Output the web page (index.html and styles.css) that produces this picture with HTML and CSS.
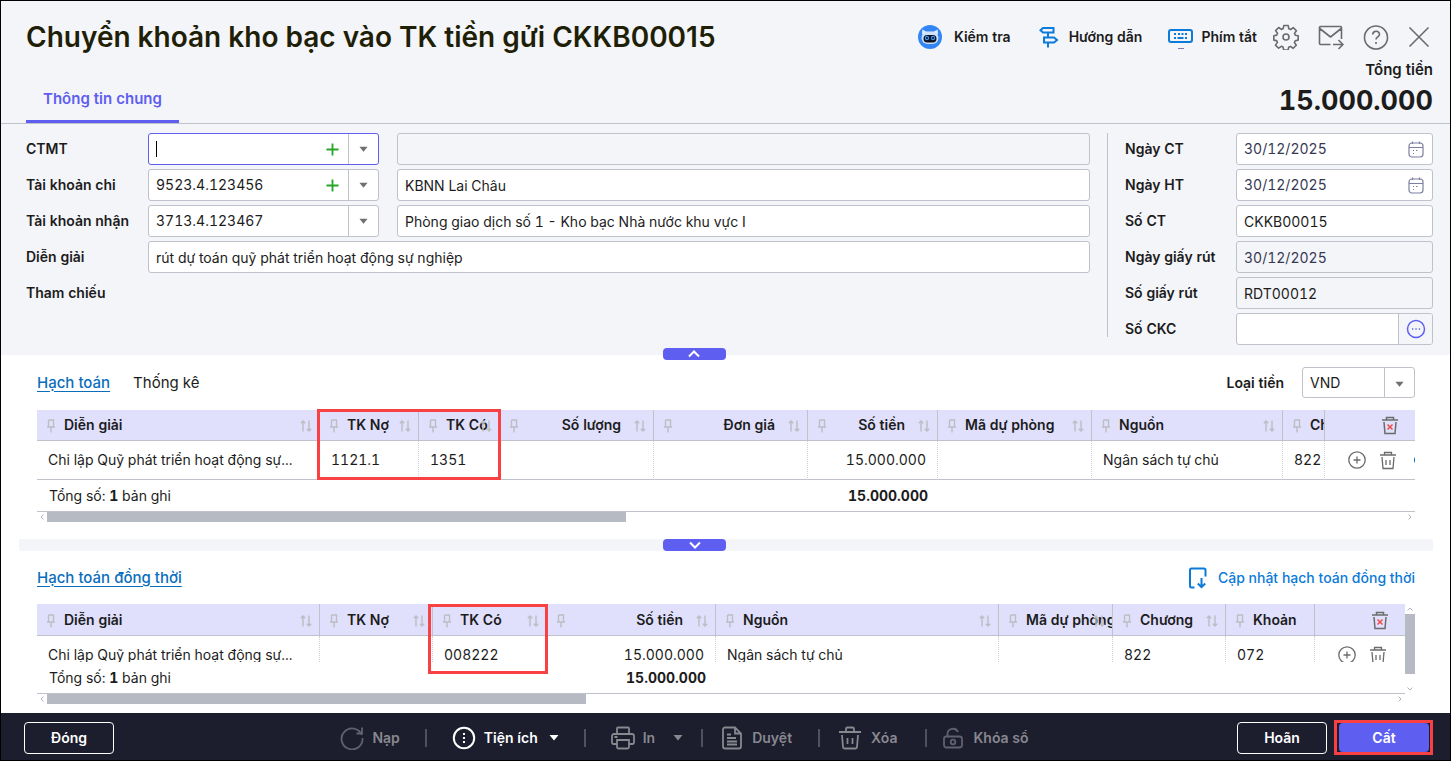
FILE: index.html
```html
<!DOCTYPE html>
<html lang="vi">
<head>
<meta charset="utf-8">
<title>Chuyển khoản kho bạc vào TK tiền gửi</title>
<link rel="stylesheet" href="styles.css">
</head>
<body>
<svg class="defs" aria-hidden="true">
  <symbol id="pin" viewBox="0 0 10 14"><path d="M2.500 1h5v6.500M2.500 1v6.500M1 8h8M5 8v5.500" /></symbol>
  <symbol id="sort" viewBox="0 0 12 12"><path d="M3 11.500V1M.8 3.200 3 1l2.200 2.200M9 .5V11M6.800 8.800 9 11l2.200-2.200" /></symbol>
  <symbol id="plus" viewBox="0 0 14 14"><path d="M7 .5v13M.5 7h13" /></symbol>
  <symbol id="caret" viewBox="0 0 10 6"><path d="M.5.500h9L5 6z" /></symbol>
  <symbol id="calendar" viewBox="0 0 16 17"><rect x="1" y="2" width="14" height="14" rx="3"/><path d="M1 6.500h14M4.500.500v2.500M11.500.500v2.500M5 9.500h1M8 9.500h1.500M5 12.500h1" /></symbol>
  <symbol id="trash" viewBox="0 0 18 20"><path d="M1 5h16M5.500 5V2.500h7V5M3 7l1 11.500h10L15 7" /></symbol>
  <symbol id="bars" viewBox="0 0 18 20"><path d="M7 10v5M11 10v5" /></symbol>
  <symbol id="addrow" viewBox="0 0 18 18"><circle cx="9" cy="9" r="8.200"/><path d="M9 5.500v7M5.500 9h7" /></symbol>
</svg>
<div class="window">
  <header class="header">
    <div class="heading">
      <h1>Chuyển khoản kho bạc vào TK tiền gửi CKKB00015</h1>
      <button class="main-tab" type="button">Thông tin chung</button>
    </div>
    <div class="summary">
      <div class="toolbar">
        <button class="tool" type="button">
          <svg width="24" height="24" viewBox="0 0 24 24"><circle cx="12" cy="12" r="12" fill="#3385f5" stroke="none"/><path d="M4 9.500 4.300 4.500 8 6.500h8l3.700-2 .3 5" fill="#d9ecff" stroke="none"/><rect x="3.500" y="7" width="17" height="12" rx="6" fill="#cfe2f7" stroke="none"/><rect x="5.500" y="10" width="13" height="7.500" rx="3.700" fill="#0b1224" stroke="none"/><circle cx="9" cy="13" r="1.600" stroke="#3f95e8" stroke-width="1.200"/><circle cx="15" cy="13" r="1.600" stroke="#3f95e8" stroke-width="1.200"/></svg>
          <span>Kiểm tra</span>
        </button>
        <button class="tool guide" type="button">
          <svg class="blue" width="20" height="22" viewBox="0 0 20 22"><path d="M4 2h10.500v4.500H4L1.500 4.250zM9 6.500v5M5 11.500h10l3 2.500-3 2.500H5zM9 16.500v5" /></svg>
          <span>Hướng dẫn</span>
        </button>
        <button class="tool keys" type="button">
          <svg class="blue" width="25" height="24" viewBox="0 0 25 24"><rect x="1" y="5" width="23" height="12" rx="2"/><path d="M6 9h2M10 9h2M13.500 9h2M17 9h2M6 13h2M9.500 13h6M17 13h2" /><path d="M10 23.500h6" stroke="#7b7fb0" stroke-width="1"/></svg>
          <span>Phím tắt</span>
        </button>
        <button class="icon-button gear" type="button" aria-label="Thiết lập"><svg width="26" height="26" viewBox="0 0 26 26"><path d="M10.800 1.500h4.400l.6 3.200 1.800.8 2.700-1.900 3.100 3.100-1.900 2.700.8 1.800 2.900.5v4.400l-3 .6-.8 1.800 1.900 2.700-3.100 3.100-2.700-1.900-1.800.8-.6 2.900h-4.400l-.6-3-1.800-.8-2.700 1.900-3.100-3.100 1.900-2.700-.8-1.800-2.800-.5v-4.400l2.900-.6.8-1.800-1.900-2.700 3.100-3.100 2.700 1.900 1.800-.8z"/><circle cx="13" cy="13" r="3"/></svg></button>
        <button class="icon-button" type="button" aria-label="Gửi thư"><svg width="26" height="26" viewBox="0 0 26 26"><path d="M12.500 20.500H2.500a1 1 0 0 1-1-1v-16a1 1 0 0 1 1-1h20a1 1 0 0 1 1 1v11.500M1.800 4.500l10.700 8.500 10.700-8.500M15 20.500h9.500M20.500 16l4.500 4.500-4.500 4.500"/></svg></button>
        <button class="icon-button" type="button" aria-label="Trợ giúp"><svg width="26" height="26" viewBox="0 0 26 26"><circle cx="13" cy="13.500" r="11.500"/><path d="M9.700 10.500c.2-4.200 6.800-4.200 6.800-.3 0 2.800-3.500 2.500-3.500 5.300M13 18v2"/></svg></button>
        <button class="icon-button" type="button" aria-label="Đóng cửa sổ"><svg width="22" height="22" viewBox="0 0 22 22"><path d="M1.500 1.500l19 19M20.500 1.500l-19 19"/></svg></button>
      </div>
      <div class="total-label">Tổng tiền</div>
      <div class="total-value">15.000.000</div>
    </div>
  </header>

  <form class="form">
    <div class="fields">
      <label for="ctmt">CTMT</label>
      <div class="combo focused">
        <input id="ctmt" type="text"><span class="text-cursor"></span>
        <button type="button" class="add" aria-label="Thêm"><svg width="13" height="13"><use href="#plus"/></svg></button>
        <button type="button" class="drop" aria-label="Mở danh sách"><svg width="9" height="6"><use href="#caret"/></svg></button>
      </div>
      <input class="box" type="text" aria-label="Tên CTMT" disabled>

      <label for="tkchi">Tài khoản chi</label>
      <div class="combo">
        <input id="tkchi" type="text" value="9523.4.123456">
        <button type="button" class="add" aria-label="Thêm"><svg width="13" height="13"><use href="#plus"/></svg></button>
        <button type="button" class="drop" aria-label="Mở danh sách"><svg width="9" height="6"><use href="#caret"/></svg></button>
      </div>
      <input class="box" type="text" aria-label="Kho bạc chi" value="KBNN Lai Châu">

      <label for="tknhan">Tài khoản nhận</label>
      <div class="combo">
        <input id="tknhan" type="text" value="3713.4.123467">
        <button type="button" class="drop" aria-label="Mở danh sách"><svg width="9" height="6"><use href="#caret"/></svg></button>
      </div>
      <input class="box" type="text" aria-label="Kho bạc nhận" value="Phòng giao dịch số 1 - Kho bạc Nhà nước khu vực I">

      <label for="diengiai">Diễn giải</label>
      <input class="box wide" id="diengiai" type="text" value="rút dự toán quỹ phát triển hoạt động sự nghiệp">

      <div class="field-name">Tham chiếu</div>
    </div>
    <div class="divider"></div>
    <div class="details">
      <label for="ngayct">Ngày CT</label>
      <div class="combo date"><input id="ngayct" type="text" value="30/12/2025"><button type="button" class="cal" aria-label="Chọn ngày"><svg width="16" height="17"><use href="#calendar"/></svg></button></div>
      <label for="ngayht">Ngày HT</label>
      <div class="combo date"><input id="ngayht" type="text" value="30/12/2025"><button type="button" class="cal" aria-label="Chọn ngày"><svg width="16" height="17"><use href="#calendar"/></svg></button></div>
      <label for="soct">Số CT</label>
      <input class="box" id="soct" type="text" value="CKKB00015">
      <label for="ngayrut">Ngày giấy rút</label>
      <input class="box date-text" id="ngayrut" type="text" value="30/12/2025" disabled>
      <label for="sorut">Số giấy rút</label>
      <input class="box" id="sorut" type="text" value="RDT00012" disabled>
      <label for="sockc">Số CKC</label>
      <div class="combo"><input id="sockc" type="text"><button type="button" class="more" aria-label="Chọn số CKC"><svg width="20" height="20" viewBox="0 0 20 20"><circle cx="10" cy="10" r="8.500"/><path d="M6 10h1.300M9.400 10h1.300M12.800 10h1.300"/></svg></button></div>
    </div>
    <button class="fold" type="button" aria-label="Thu gọn"><svg width="12" height="8" viewBox="0 0 12 8"><path d="M1 6.500 6 1.500l5 5"/></svg></button>
  </form>

  <main class="content">
    <section class="grid-section">
      <div class="section-head first">
        <a class="active" href="#hach-toan">Hạch toán</a>
        <a class="plain" href="#thong-ke">Thống kê</a>
        <label class="currency-label" for="currency">Loại tiền</label>
        <div class="currency"><select id="currency"><option>VND</option></select><svg width="9" height="6"><use href="#caret"/></svg></div>
      </div>
      <div class="grid">
        <table>
          <colgroup><col class="w283"><col class="w99"><col class="w81"><col class="w154"><col class="w154"><col class="w130"><col class="w154"><col><col class="w42"><col class="w90"></colgroup>
          <thead><tr>
            <th><div class="th"><svg class="pin"><use href="#pin"/></svg><span>Diễn giải</span><svg class="sort"><use href="#sort"/></svg></div></th>
            <th><div class="th"><svg class="pin"><use href="#pin"/></svg><span>TK Nợ</span><svg class="sort"><use href="#sort"/></svg></div></th>
            <th><div class="th"><svg class="pin"><use href="#pin"/></svg><span>TK Có</span><svg class="sort"><use href="#sort"/></svg></div></th>
            <th><div class="th num"><svg class="pin"><use href="#pin"/></svg><span>Số lượng</span><svg class="sort"><use href="#sort"/></svg></div></th>
            <th><div class="th num"><svg class="pin"><use href="#pin"/></svg><span>Đơn giá</span><svg class="sort"><use href="#sort"/></svg></div></th>
            <th><div class="th num"><svg class="pin"><use href="#pin"/></svg><span>Số tiền</span><svg class="sort"><use href="#sort"/></svg></div></th>
            <th><div class="th"><svg class="pin"><use href="#pin"/></svg><span>Mã dự phòng</span><svg class="sort"><use href="#sort"/></svg></div></th>
            <th><div class="th"><svg class="pin"><use href="#pin"/></svg><span>Nguồn</span><svg class="sort"><use href="#sort"/></svg></div></th>
            <th><div class="th"><svg class="pin"><use href="#pin"/></svg><span>Chương</span></div></th>
            <th><button class="clear" type="button" aria-label="Xóa tất cả"><svg width="18" height="20" viewBox="0 0 18 20"><use href="#trash"/><path class="cross" d="M6.500 9.500l5 5M11.500 9.500l-5 5"/></svg></button></th>
          </tr></thead>
          <tbody><tr>
            <td>Chi lập Quỹ phát triển hoạt động sự...</td><td>1121.1</td><td>1351</td><td></td><td></td><td class="num">15.000.000</td><td></td><td>Ngân sách tự chủ</td><td class="narrow">822</td>
            <td><div class="actions"><button type="button" aria-label="Thêm dòng"><svg width="18" height="18"><use href="#addrow"/></svg></button><button type="button" aria-label="Xóa dòng"><svg width="18" height="20"><use href="#trash"/><use href="#bars"/></svg></button><i class="more-edge"></i></div></td>
          </tr></tbody>
        </table>
        <table class="totals"><colgroup><col class="w771"><col class="w130"><col></colgroup>
          <tbody><tr><td>Tổng số: <b>1</b> bản ghi</td><td class="num"><b>15.000.000</b></td><td></td></tr></tbody></table>
        <div class="mark mark-one"></div>
      </div>
      <div class="hscroll"><svg width="4" height="6" viewBox="0 0 4 6"><path d="M3.500.500 1 3l2.500 2.500"/></svg><i class="thumb thumb-one"></i><svg width="4" height="6" viewBox="0 0 4 6"><path d="M.5.500 3 3 .5 5.500"/></svg></div>
    </section>

    <div class="splitter"><button class="fold" type="button" aria-label="Mở rộng"><svg width="12" height="8" viewBox="0 0 12 8"><path d="M1 1.500l5 5 5-5"/></svg></button></div>

    <section class="grid-section last">
      <div class="section-head">
        <a class="active" href="#dong-thoi">Hạch toán đồng thời</a>
        <button class="update" type="button"><svg width="20" height="22" viewBox="0 0 20 22"><path d="M6.500 20.500H3.500a1.500 1.500 0 0 1-1.500-1.500V3a1.500 1.500 0 0 1 1.500-1.500h12.500A1.500 1.500 0 0 1 17.500 3v6.500M13.500 11v9M9.800 16.500l3.700 3.700 3.700-3.700"/></svg><span>Cập nhật hạch toán đồng thời</span></button>
      </div>
      <div class="with-vscroll">
        <div class="grid-pane">
          <div class="grid">
            <div class="clip">
              <table>
                <colgroup><col class="w283"><col class="w113"><col class="w114"><col class="w169"><col><col class="w114"><col class="w113"><col class="w89"><col class="w90"></colgroup>
                <thead><tr>
                  <th><div class="th"><svg class="pin"><use href="#pin"/></svg><span>Diễn giải</span><svg class="sort"><use href="#sort"/></svg></div></th>
                  <th><div class="th"><svg class="pin"><use href="#pin"/></svg><span>TK Nợ</span><svg class="sort"><use href="#sort"/></svg></div></th>
                  <th><div class="th"><svg class="pin"><use href="#pin"/></svg><span>TK Có</span><svg class="sort"><use href="#sort"/></svg></div></th>
                  <th><div class="th num"><svg class="pin"><use href="#pin"/></svg><span>Số tiền</span><svg class="sort"><use href="#sort"/></svg></div></th>
                  <th><div class="th"><svg class="pin"><use href="#pin"/></svg><span>Nguồn</span><svg class="sort"><use href="#sort"/></svg></div></th>
                  <th><div class="th"><svg class="pin"><use href="#pin"/></svg><span>Mã dự phòng</span><svg class="sort"><use href="#sort"/></svg></div></th>
                  <th><div class="th"><svg class="pin"><use href="#pin"/></svg><span>Chương</span><svg class="sort"><use href="#sort"/></svg></div></th>
                  <th><div class="th"><svg class="pin"><use href="#pin"/></svg><span>Khoản</span></div></th>
                  <th><button class="clear" type="button" aria-label="Xóa tất cả"><svg width="18" height="20" viewBox="0 0 18 20"><use href="#trash"/><path class="cross" d="M6.500 9.500l5 5M11.500 9.500l-5 5"/></svg></button></th>
                </tr></thead>
                <tbody><tr>
                  <td>Chi lập Quỹ phát triển hoạt động sự...</td><td></td><td>008222</td><td class="num">15.000.000</td><td>Ngân sách tự chủ</td><td></td><td>822</td><td>072</td>
                  <td><div class="actions"><button type="button" aria-label="Thêm dòng"><svg width="18" height="18"><use href="#addrow"/></svg></button><button type="button" aria-label="Xóa dòng"><svg width="18" height="20"><use href="#trash"/><use href="#bars"/></svg></button></div></td>
                </tr></tbody>
              </table>
            </div>
            <table class="totals"><colgroup><col class="w510"><col class="w169"><col></colgroup>
              <tbody><tr><td>Tổng số: <b>1</b> bản ghi</td><td class="num"><b>15.000.000</b></td><td></td></tr></tbody></table>
            <div class="mark mark-two"></div>
          </div>
          <div class="hscroll"><svg width="4" height="6" viewBox="0 0 4 6"><path d="M3.500.500 1 3l2.500 2.500"/></svg><i class="thumb thumb-two"></i><svg width="4" height="6" viewBox="0 0 4 6"><path d="M.5.500 3 3 .5 5.500"/></svg></div>
        </div>
        <div class="vscroll"><svg width="6" height="4" viewBox="0 0 6 4"><path d="M.5 3.500 3 1l2.500 2.500"/></svg><i></i><svg width="6" height="4" viewBox="0 0 6 4"><path d="M.5.500 3 3 5.500.500"/></svg></div>
      </div>
    </section>
  </main>

  <footer class="footer">
    <button class="outline" type="button">Đóng</button>
    <div class="commands">
      <button class="command dim" type="button" disabled><svg width="24" height="24" viewBox="0 0 24 24"><path d="M21.800 9A10.500 10.500 0 1 0 22.500 12M22 1.500V7.500H16.500" /></svg><span>Nạp</span></button>
      <i class="sep wide-sep"></i>
      <button class="command" type="button"><svg width="24" height="24" viewBox="0 0 24 24"><circle cx="12" cy="12" r="10.200" stroke-width="2"/><path d="M12 7v2M12 11v2M12 15v2" stroke-width="2"/></svg><span>Tiện ích</span><svg class="arrow" width="10" height="7"><use href="#caret"/></svg></button>
      <i class="sep wide-sep"></i>
      <button class="command" type="button" disabled><svg width="24" height="24" viewBox="0 0 24 24"><path d="M6 8V2.500a1 1 0 0 1 1-1h10a1 1 0 0 1 1 1V8M6 18H2.500a1.500 1.500 0 0 1-1.500-1.500v-6.500A2 2 0 0 1 3 8h18a2 2 0 0 1 2 2v6.500a1.500 1.500 0 0 1-1.500 1.500H18M6 14h12v7a1.500 1.500 0 0 1-1.500 1.500h-9A1.500 1.500 0 0 1 6 21zM3.500 11h3"/></svg><span>In</span><svg class="arrow far" width="10" height="7"><use href="#caret"/></svg></button>
      <i class="sep even-sep"></i>
      <button class="command" type="button" disabled><svg width="20" height="24" viewBox="0 0 20 24"><path d="M13 1.500H3A2 2 0 0 0 1 3.500v17a2 2 0 0 0 2 2h14a2 2 0 0 0 2-2V7.500zM13 1.500v6h6M5 8.500h4M5 12h9M5 15.500h10M5 18.500h10"/></svg><span class="shift">Duyệt</span></button>
      <i class="sep"></i>
      <button class="command" type="button" disabled><svg width="22" height="24" viewBox="0 0 22 24"><path d="M0 6h22M7 6V3a1.500 1.500 0 0 1 1.500-1.500h5A1.500 1.500 0 0 1 15 3v3M3 9l1 12a1.500 1.500 0 0 0 1.500 1.500h11A1.500 1.500 0 0 0 18 21l1-12M8.500 12v6M13.500 12v6"/></svg><span class="shift">Xóa</span></button>
      <i class="sep tight-sep"></i>
      <button class="command dim" type="button" disabled><svg width="20" height="24" viewBox="0 0 20 24"><path d="M4.500 10.500V8c0-6 8.500-7 10.500-2M3.500 10.500h13a2.500 2.500 0 0 1 2.500 2.500v6a2.500 2.500 0 0 1-2.500 2.500h-13A2.500 2.500 0 0 1 1 19v-6a2.500 2.500 0 0 1 2.500-2.500z"/><circle cx="10" cy="16" r="2.300"/></svg><span class="shift">Khóa sổ</span></button>
    </div>
    <div class="decisions">
      <button class="outline" type="button">Hoãn</button>
      <div class="save-mark"><button class="save" type="button">Cất</button></div>
    </div>
  </footer>
</div>
</body>
</html>
```
FILE: styles.css
```css
* { box-sizing: border-box; }
body { margin: 0; font-family: Inter, "Noto Sans", sans-serif; font-size: 14px; line-height: 20px; color: #1c1c1c; background: #fff; font-variant-numeric: tabular-nums; }
button, input, select { font: inherit; color: inherit; font-variant-numeric: inherit; }
button { border: 0; background: none; padding: 0; cursor: pointer; }
svg { display: block; fill: none; stroke: currentColor; flex: none; }
.defs { position: absolute; width: 0; height: 0; }
.window { min-height: 100vh; display: flex; flex-direction: column; border: 1px solid #000; background: #fff; }

.header { display: flex; justify-content: space-between; background: #f4f5f9; border-bottom: 1px solid #bfc1cb; padding: 0 17px 0 25px; }
.heading { display: flex; flex-direction: column; justify-content: space-between; align-items: flex-start; }
h1 { margin: 18px 0 0; font-size: 28px; line-height: 36px; font-weight: 600; color: #1f1f08; font-variant-numeric: normal; white-space: nowrap; }
.main-tab { height: 46px; padding: 0 17px; font-size: 15px; font-weight: 600; color: #5e5ff0; border-bottom: 3px solid #5e5ff0; }
.summary { display: flex; flex-direction: column; align-items: flex-end; padding: 22px 0 6px; }
.toolbar { display: flex; align-items: center; height: 28px; margin-right: 3px; }
.tool { display: flex; align-items: center; gap: 12px; font-weight: 600; }
.guide { margin-left: 28px; gap: 10px; }
.keys { margin-left: 26px; gap: 8px; }
.blue { color: #0b7ad8; stroke-width: 2; }
.icon-button { margin-left: 19px; color: #6b6b6b; stroke-width: 1.6px; stroke-linejoin: round; }
.icon-button.gear { margin-left: 16px; }
.total-label { margin-top: 9px; font-size: 15px; font-weight: 600; }
.total-value { margin-top: 5px; font-size: 27px; line-height: 32px; font-weight: 700; }

.form { position: relative; display: flex; gap: 17px; padding: 9px 17px 10px 25px; background: #f4f5f9; }
.fields { flex: 1; display: grid; grid-template-columns: 104px 231px 1fr; column-gap: 18px; row-gap: 4px; grid-auto-rows: 32px; align-items: center; }
.wide { grid-column: 2 / 4; }
label, .field-name { font-weight: 600; white-space: nowrap; }
.divider { width: 1px; background: #bfc1cb; margin-bottom: 8px; }
.details { display: grid; grid-template-columns: 94px 197px; column-gap: 17px; row-gap: 4px; grid-auto-rows: 32px; align-items: center; }
.box, .combo { width: 100%; height: 32px; border: 1px solid #bfc1cb; border-radius: 3px; background: #fff; }
.box { padding: 0 7px; }
.box:disabled { background: #f4f5f9; opacity: 1; }
.combo { position: relative; display: flex; align-items: stretch; overflow: hidden; }
.combo input { flex: 1; min-width: 0; border: 0; outline: 0; background: transparent; padding: 0 7px; }
.focused { border-color: #5e5ff0; }
.text-cursor { position: absolute; left: 7px; top: 7px; width: 1px; height: 16px; background: #000; }
.add { display: grid; place-items: center; width: 32px; color: #28a628; stroke-width: 2; }
.drop { display: grid; place-items: center; width: 30px; border-left: 1px solid #bfc1cb; }
.drop svg, .currency svg { fill: #707070; stroke: none; }
.date, .date-text { color: #363853; }
.cal { display: grid; place-items: center; width: 32px; color: #7c7f9f; stroke-width: 1.2px; }
.more { display: grid; place-items: center; width: 34px; border-left: 1px solid #bfc1cb; background: #f4f5f9; color: #5e5ff0; stroke-width: 1.5px; }
.fold { position: absolute; left: calc(50% - 63px); bottom: -5px; width: 63px; height: 12px; display: grid; place-items: center; border-radius: 4px; background: #5e5ff0; color: #fff; stroke-width: 2; }

.content { flex: 1; }
.grid-section { padding: 0 35px 17px 36px; }
.last { padding-bottom: 9px; }
.section-head { display: flex; align-items: center; height: 53px; font-size: 15px; }
.first { height: 55px; }
a.active { color: #0a6ebd; font-weight: 500; text-decoration: underline; text-underline-offset: 3px; }
a.plain { color: inherit; text-decoration: none; margin-left: 23px; }
.currency-label { margin-left: auto; font-size: 14px; }
.currency { position: relative; width: 113px; height: 31px; margin-left: 18px; border: 1px solid #bfc1cb; border-radius: 3px; display: flex; align-items: center; font-size: 14px; }
.currency select { width: 100%; height: 100%; border: 0; background: transparent; padding: 0 7px; appearance: none; background-image: linear-gradient(#bfc1cb, #bfc1cb); background-size: 1px 100%; background-position: right 29px top 0; background-repeat: no-repeat; }
.currency svg { position: absolute; right: 10px; top: 13px; pointer-events: none; }
.grid { position: relative; }
table { width: 100%; table-layout: fixed; border-collapse: separate; border-spacing: 0; }
.w42 { width: 42px; } .w81 { width: 81px; } .w89 { width: 89px; } .w90 { width: 90px; } .w99 { width: 99px; }
.w113 { width: 113px; } .w114 { width: 114px; } .w130 { width: 130px; } .w154 { width: 154px; } .w169 { width: 169px; }
.w283 { width: 283px; } .w510 { width: 510px; } .w771 { width: 771px; }
th { height: 31px; padding: 0; background: #e0e0fc; border-right: 1px solid #bfc1cb; border-bottom: 1px solid #bfc1cb; font-weight: 600; text-align: left; overflow: hidden; }
th:last-child, td:last-child { border-right: 0; }
.th { position: relative; display: flex; align-items: center; white-space: nowrap; padding-left: 27px; overflow: hidden; }
.th.num { justify-content: flex-end; padding-right: 32px; }
.pin { position: absolute; left: 9px; top: 4px; width: 10px; height: 14px; color: #bdbdc4; stroke-width: 1.4px; }
.sort { position: absolute; right: 7px; top: 5px; width: 12px; height: 12px; color: #bdbdc4; stroke-width: 1.4px; }
td { height: 39px; padding: 0 11px; border-right: 1px dotted #cfd0d6; border-bottom: 1px solid #bfc1cb; white-space: nowrap; overflow: hidden; }
td.num { text-align: right; }
td.narrow { padding-right: 0; }
td:last-child { padding: 0; }
.clear { display: block; margin-left: 56px; color: #6b6b6b; stroke-width: 1.5px; }
.cross { stroke: #f04a4a; }
.actions { display: flex; align-items: center; padding-left: 23px; color: #6b6b6b; stroke-width: 1.3px; }
.actions button + button { margin-left: 13px; }
.more-edge { width: 12px; height: 12px; margin-left: 17px; border-radius: 6px; background: #0a6ebd; flex: none; }
.totals td { height: 32px; border-right: 0; }
.totals td:first-child { padding-left: 12px; }
.totals td.num { padding-right: 10px; }
.clip { height: 58px; overflow: hidden; }
.clip th { height: 32px; }
.clip td { height: 38px; }
.mark { position: absolute; border: 3px solid #f94144; pointer-events: none; }
.mark-one { left: 280px; top: -1px; width: 184px; height: 71px; }
.mark-two { left: 391px; top: 0; width: 120px; height: 70px; }
.hscroll { display: flex; align-items: center; height: 10px; padding: 0 3px; color: #b0b3bb; }
.thumb { height: 10px; margin: 0 auto 0 3px; background: #b6bac2; }
.thumb-one { width: 579px; }
.thumb-two { width: 539px; }
.splitter { position: relative; height: 12px; margin: 0 17px 0 18px; border-radius: 2px; background: #f4f5f9; }
.splitter .fold { bottom: 0; }
.update { display: flex; align-items: center; gap: 10px; margin-left: auto; font-size: 14px; font-weight: 500; color: #0b7ad8; }
.update svg { stroke-width: 2; }
.with-vscroll { display: flex; }
.grid-pane { flex: 1; min-width: 0; }
.vscroll { width: 10px; display: flex; flex-direction: column; align-items: center; padding-top: 3px; color: #b0b3bb; }
.vscroll i { width: 10px; height: 60px; margin: 3px 0 13px; background: #b6bac2; }
.last { padding-bottom: 8px; }

.footer { display: flex; align-items: center; justify-content: space-between; height: 47px; padding: 2px 17px 0 23px; background: #1c1d2d; color: #fff; font-weight: 600; }
.outline { width: 90px; height: 32px; border: 1px solid #fff; border-radius: 4px; }
.commands { display: flex; align-items: center; margin-left: 18px; }
.command { display: flex; align-items: center; gap: 8px; stroke-width: 1.8px; }
.command:disabled { color: #88888f; }
.command.dim svg { color: #606170; }
.command .shift { margin-left: 2px; }
.arrow { fill: currentColor; stroke: none; margin-left: 3px; }
.far { margin-left: 10px; }
.sep { width: 2px; height: 18px; margin: 0 19px 0 26px; background: #50515e; }
.wide-sep { margin-left: 25px; margin-right: 25px; }
.even-sep { margin-left: 18px; }
.tight-sep { margin: 0 16px 0 28px; }
.decisions { display: flex; align-items: center; gap: 7px; }
.save-mark { border: 3px solid #f94144; padding: 0 1px 0 2px; }
.save { display: block; width: 90px; height: 29px; border-radius: 4px; background: #5e5ff0; }
```
